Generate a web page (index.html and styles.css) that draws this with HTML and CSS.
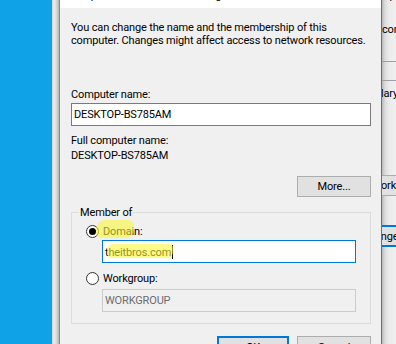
FILE: index.html
```html
<!DOCTYPE html>
<html>
<head>
<meta charset="utf-8">
<link rel="stylesheet" href="styles.css">
</head>
<body>
<div class="screen">
  <div class="desktop"></div>
  <div class="backwin">
    <div class="back-left"></div>
    <div class="dialog">
      <div class="titlebar"><span class="title">Computer Name/Domain Changes</span></div>
      <div class="content">
        <p class="intro">You can change the name and the membership of this<br>computer. Changes might affect access to network resources.</p>
        <div class="lbl lbl-cn">Computer name:</div>
        <div class="input">DESKTOP-BS785AM</div>
        <div class="lbl lbl-full">Full computer name:</div>
        <div class="fullname">DESKTOP-BS785AM</div>
        <div class="more-row"><button class="btn btn-more">More...</button></div>
        <fieldset class="group">
          <legend>Member of</legend>
          <div class="radio-row"><span class="radio checked"></span><span class="hl hl-domain">Domain:</span></div>
          <div class="input focused">t<span class="hl hl-text">heitbros.com</span><span class="caret"></span></div>
          <div class="radio-row radio-row-2"><span class="radio"></span><span>Workgroup:</span></div>
          <div class="input disabled">WORKGROUP</div>
        </fieldset>
        <div class="actions"><button class="btn btn-ok">OK</button><button class="btn btn-cancel">Cancel</button></div>
      </div>
    </div>
    <div class="back-right">
      <div class="br-top">mputer name</div>
      <div class="br-line br-computer">computer</div>
      <div class="br-box"></div>
      <div class="br-line br-mary">Mary's Computer</div>
      <div class="br-btn br-net"><span>Network ID...</span></div>
      <div class="br-btn br-change"><span>Change...</span></div>
    </div>
  </div>
</div>
</body>
</html>
```
FILE: styles.css
```css
html, body {
  margin: 0;
  padding: 0;
}
body {
  width: 396px;
  height: 344px;
  overflow: hidden;
}
.screen {
  display: flex;
  height: 344px;
  overflow: hidden;
  font-family: Roboto, "Liberation Sans", Arial, sans-serif;
  font-size: 11px;
  line-height: 13px;
  letter-spacing: -0.15px;
  color: #000;
}
.desktop {
  width: 52px;
  flex: none;
  background: #10a2e6;
}
.backwin {
  flex: 1;
  display: flex;
  background: #f0f0f0;
  min-width: 0;
}
.back-left {
  width: 7px;
  flex: none;
  background: linear-gradient(to right, #d4d4d4, #ededed 30%, #dadada 60%, #b4b4b4);
}
.dialog {
  width: 323px;
  flex: none;
  box-sizing: border-box;
  border-left: 1px solid #8a8a8a;
  border-right: 1px solid #6f6f6f;
  background: #f0f0f0;
  overflow: hidden;
}
.titlebar {
  height: 8px;
  background: #fff;
  overflow: hidden;
  padding-left: 8px;
}
.title {
  display: block;
  margin-top: -11px;
  white-space: nowrap;
}
.content {
  padding: 13px 10px 0 11px;
}
.intro {
  margin: 0;
  white-space: nowrap;
}
.lbl-cn {
  margin-top: 41px;
}
.input {
  margin-top: 2px;
  height: 23px;
  box-sizing: border-box;
  border: 1px solid #7a7a7a;
  background: #fff;
  padding: 4px 2px;
  white-space: nowrap;
}
.lbl-full {
  margin-top: 8px;
}
.fullname {
  margin-top: 2px;
}
.more-row {
  display: flex;
  justify-content: flex-end;
  margin-top: 14px;
}
.btn {
  font: inherit;
  letter-spacing: inherit;
  color: #000;
  height: 21px;
  width: 74px;
  box-sizing: border-box;
  border: 1px solid #adadad;
  background: #e1e1e1;
  padding: 0;
  margin: 0;
}
.group {
  margin: 9px 0 0;
  padding: 0 0 11px 0;
  border: 1px solid #dcdcdc;
  min-width: 0;
}
.group legend {
  margin-left: 7px;
  padding: 0 1px;
}
.radio-row {
  display: flex;
  align-items: center;
  margin: 6px 14px 0;
  height: 13px;
}
.radio-row-2 {
  margin-top: 9px;
}
.radio {
  width: 13px;
  height: 13px;
  box-sizing: border-box;
  border: 1px solid #333;
  border-radius: 50%;
  background: #fff;
  margin-right: 4px;
  flex: none;
  display: flex;
  align-items: center;
  justify-content: center;
}
.radio.checked::after {
  content: "";
  width: 7px;
  height: 7px;
  border-radius: 50%;
  background: #000;
}
.group .input {
  margin: 2px 14px 0 30px;
}
.group .input.disabled {
  margin-top: 4px;
  border-color: #cccccc;
  background: #f0f0f0;
  color: #6d6d6d;
}
.input.focused {
  border-color: #0078d7;
}
.hl {
  position: relative;
}
.hl::after {
  content: "";
  position: absolute;
  background: rgba(250, 246, 50, 0.58);
  pointer-events: none;
}
.hl-domain::after {
  left: -7px;
  top: -5px;
  width: 38px;
  height: 18px;
  border-radius: 9px 6px 8px 5px;
}
.hl-text::after {
  left: -1px;
  right: -2px;
  top: -2px;
  height: 14px;
  border-radius: 6px 4px 6px 5px;
}
.caret {
  display: inline-block;
  width: 1px;
  height: 14px;
  background: #000;
  margin-left: 1px;
  vertical-align: -3px;
}
.actions {
  display: flex;
  justify-content: flex-end;
  gap: 8px;
  margin-top: 12px;
}
.actions .btn {
  height: 23px;
}
.btn-ok {
  width: 72px;
  border: 2px solid #0078d7;
}
.back-right {
  flex: 1;
  min-width: 0;
  overflow: hidden;
  background: linear-gradient(to right, #b8b8b8, #dcdcdc 3px, #ebebeb 7px, #f0f0f0);
  white-space: nowrap;
}
.br-top {
  margin-top: -11px;
  margin-left: -2px;
}
.br-computer {
  margin-top: 21px;
}
.br-box {
  margin-top: 25px;
  height: 20px;
  box-sizing: border-box;
  border-top: 1px solid #a0a0a0;
  border-bottom: 1px solid #a0a0a0;
}
.br-mary {
  margin-top: 6px;
  margin-left: -8px;
}
.br-btn {
  box-sizing: border-box;
  background: #e1e1e1;
  display: flex;
  align-items: center;
}
.br-net {
  margin-top: 75px;
  height: 21px;
  border-top: 1px solid #adadad;
  border-bottom: 1px solid #adadad;
}
.br-net span {
  margin-left: -26px;
}
.br-change {
  margin-top: 29px;
  height: 22px;
  border-top: 2px solid #0078d7;
  border-bottom: 2px solid #0078d7;
}
.br-change span {
  margin-left: -20px;
}
```
